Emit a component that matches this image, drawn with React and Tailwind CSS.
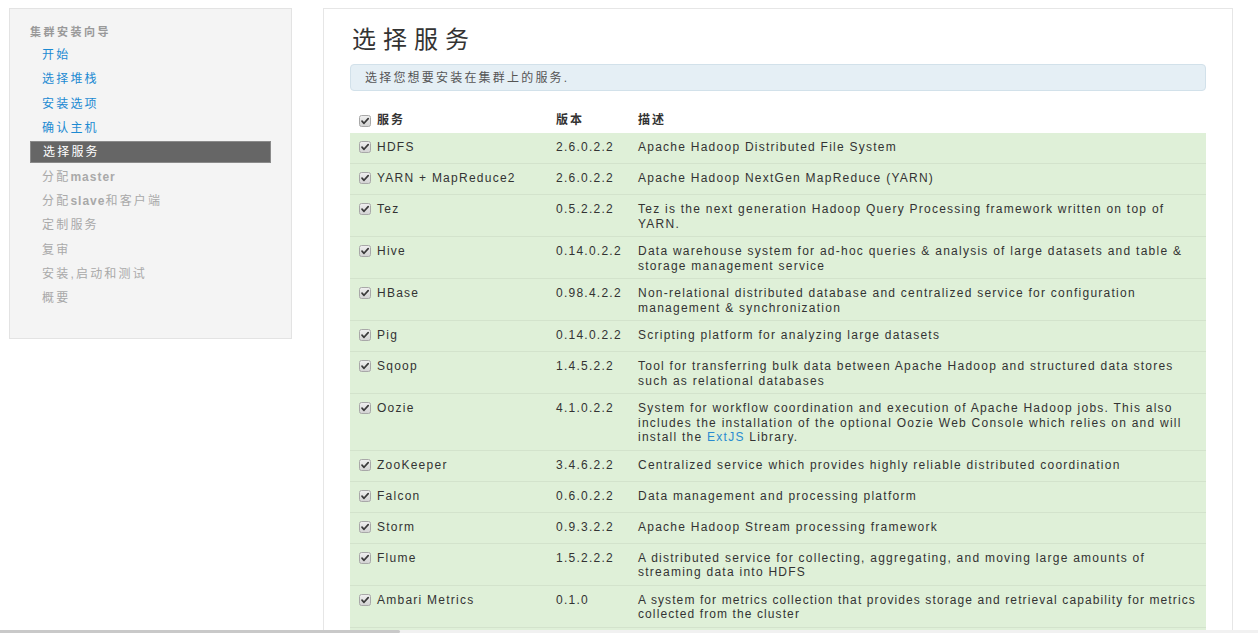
import React from 'react';

const font = { fontFamily: '"Liberation Sans", "Noto Sans CJK SC", sans-serif' };

const steps = [
  { label: '开始', state: 'done' },
  { label: '选择堆栈', state: 'done' },
  { label: '安装选项', state: 'done' },
  { label: '确认主机', state: 'done' },
  { label: '选择服务', state: 'active' },
  { label: '分配', latin: 'master', state: 'todo' },
  { label: '分配', latin: 'slave', rest: '和客户端', state: 'todo' },
  { label: '定制服务', state: 'todo' },
  { label: '复审', state: 'todo' },
  { label: '安装,启动和测试', state: 'todo' },
  { label: '概要', state: 'todo' },
];

const services = [
  ['HDFS', '2.6.0.2.2', 'Apache Hadoop Distributed File System'],
  ['YARN + MapReduce2', '2.6.0.2.2', 'Apache Hadoop NextGen MapReduce (YARN)'],
  ['Tez', '0.5.2.2.2', 'Tez is the next generation Hadoop Query Processing framework written on top of YARN.'],
  ['Hive', '0.14.0.2.2', 'Data warehouse system for ad-hoc queries & analysis of large datasets and table & storage management service'],
  ['HBase', '0.98.4.2.2', 'Non-relational distributed database and centralized service for configuration management & synchronization'],
  ['Pig', '0.14.0.2.2', 'Scripting platform for analyzing large datasets'],
  ['Sqoop', '1.4.5.2.2', 'Tool for transferring bulk data between Apache Hadoop and structured data stores such as relational databases'],
  ['Oozie', '4.1.0.2.2', 'OOZIE'],
  ['ZooKeeper', '3.4.6.2.2', 'Centralized service which provides highly reliable distributed coordination'],
  ['Falcon', '0.6.0.2.2', 'Data management and processing platform'],
  ['Storm', '0.9.3.2.2', 'Apache Hadoop Stream processing framework'],
  ['Flume', '1.5.2.2.2', 'A distributed service for collecting, aggregating, and moving large amounts of streaming data into HDFS'],
  ['Ambari Metrics', '0.1.0', 'A system for metrics collection that provides storage and retrieval capability for metrics collected from the cluster', true],
  ['Kafka', '0.8.1.2.2', 'A high-throughput distributed messaging system'],
];

const Check = () => (
  <svg width="12" height="12" viewBox="0 0 12 12" className="shrink-0">
    <defs>
      <linearGradient id="cbg" x1="0" y1="0" x2="0" y2="1">
        <stop offset="0" stopColor="#f0f0f0" />
        <stop offset="1" stopColor="#d2d2d2" />
      </linearGradient>
    </defs>
    <rect x="0.5" y="0.5" width="11" height="11" rx="2" fill="url(#cbg)" stroke="#a8a8a8" />
    <path d="M3 6.2 L5 8.3 L9.2 3.6" fill="none" stroke="#3a3a3a" strokeWidth="1.7" strokeLinecap="round" strokeLinejoin="round" />
  </svg>
);

export default function App() {
  return (
    <div className="relative h-[633px] w-[1258px] overflow-hidden bg-white text-[#333]" style={font}>
      <div className="flex items-start pt-[8px] pl-[9px]">
        {/* Sidebar */}
        <div className="w-[283px] h-[331px] shrink-0 bg-[#f4f4f4] border border-[#e3e3e3] pt-[15px] px-[20px]">
          <div className="text-[11px] leading-[16px] font-bold text-[#999] tracking-[2.5px]">集群安装向导</div>
          <ul className="mt-[3px]">
            {steps.map((s) => {
              const cls =
                s.state === 'done'
                  ? 'h-[24.3px] text-[#1c8ad2]'
                  : s.state === 'active'
                  ? 'h-[22.3px] my-[1px] bg-[#666] text-white border border-[#8a8a8a]'
                  : 'h-[24.3px] text-[#a9a9a9]';
              return (
                <li
                  key={s.label + (s.latin || '') + (s.rest || '')}
                  className={`flex items-center pl-[12px] text-[12px] tracking-[2.2px] ${cls}`}
                >
                  {s.label}
                  {s.latin && <span className="font-bold tracking-[1px]">{s.latin}</span>}
                  {s.rest}
                </li>
              );
            })}
          </ul>
        </div>

        {/* Main panel */}
        <div className="ml-[31px] w-[910px] h-[660px] shrink-0 border border-[#e6e6e6] px-[26px] pt-[16px]">
          <h1 className="pl-[2px] text-[24px] leading-[30px] tracking-[7px] text-[#333]">选择服务</h1>
          <div className="mt-[9px] h-[27px] flex items-center px-[14px] bg-[#e5eff5] border border-[#d2e1ea] rounded-[4px] text-[12px] tracking-[2.2px] text-[#555]">
            选择您想要安装在集群上的服务.
          </div>

          <table className="mt-[17px] w-[856px] border-collapse table-fixed text-[12px] tracking-[1.25px]">
            <colgroup>
              <col className="w-[198px]" />
              <col className="w-[82px]" />
              <col />
            </colgroup>
            <thead>
              <tr>
                <th className="text-left font-bold pl-[9px] py-[5px] leading-[15px]">
                  <div className="flex items-center gap-[6px]">
                    <Check />
                    <span className="tracking-[2px]">服务</span>
                  </div>
                </th>
                <th className="text-left font-bold px-[8px] py-[5px] leading-[15px] tracking-[2px]">版本</th>
                <th className="text-left font-bold px-[8px] py-[5px] leading-[15px] tracking-[2px]">描述</th>
              </tr>
            </thead>
            <tbody>
              {services.map(([name, version, desc, tight], i) => (
                <tr key={name} className={`bg-[#dff0d8] ${i > 0 ? 'border-t border-[#d3e3cc]' : ''}`}>
                  <td className="align-top pl-[9px] pt-[7px] pb-[5px]">
                    <div className="flex items-start gap-[6px] h-[18px] leading-[14.5px]">
                      <span className="mt-[1px]"><Check /></span>
                      <span>{name}</span>
                    </div>
                  </td>
                  <td className="align-top px-[8px] pt-[7px] pb-[5px] leading-[14.5px]">{version}</td>
                  <td className={`align-top pl-[8px] pr-[2px] pt-[7px] pb-[5px] leading-[14.5px] ${tight ? 'tracking-[1.1px]' : ''}`}>
                    {desc === 'OOZIE' ? (
                      <>
                        System for workflow coordination and execution of Apache Hadoop jobs. This also includes the installation of the optional Oozie Web Console which relies on and will install the{' '}
                        <a href="#" className="text-[#2a8bd0]">ExtJS</a> Library.
                      </>
                    ) : (
                      desc
                    )}
                  </td>
                </tr>
              ))}
            </tbody>
          </table>
        </div>
      </div>

      {/* bottom scrollbar strip */}
      <div className="absolute left-0 bottom-0 w-[1258px] h-[3px] bg-[#f1f1f1]">
        <div className="w-[400px] h-[3px] bg-[#c9c9c9] rounded-r-[2px]" />
      </div>
    </div>
  );
}
